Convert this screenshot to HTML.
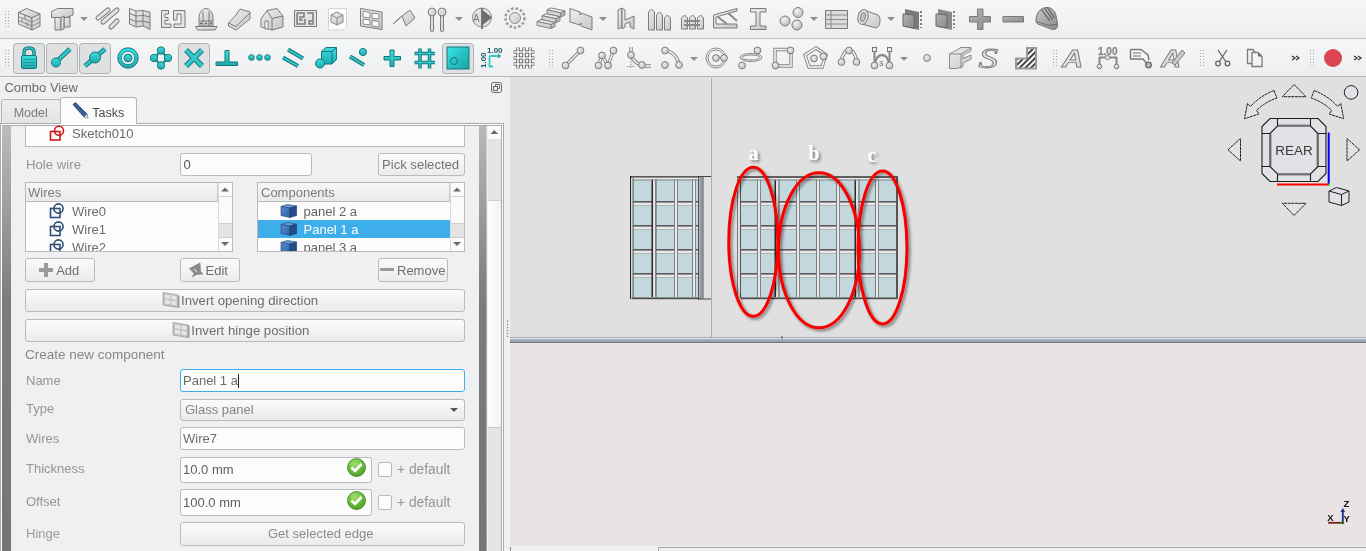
<!DOCTYPE html>
<html><head><meta charset="utf-8"><style>
*{margin:0;padding:0;box-sizing:border-box}
html,body{width:1366px;height:551px;overflow:hidden;background:#eff0f1;font-family:"Liberation Sans",sans-serif;font-size:13px;color:#31363b;position:relative}
.a{position:absolute}
svg{will-change:transform}
svg text{font-family:"Liberation Sans",sans-serif}
svg text.ser{font-family:"Liberation Serif",serif}
svg .serif text{font-family:"Liberation Serif",serif;font-weight:bold;font-size:20px}
.inp{position:absolute;background:#fcfcfc;border:1px solid #b8babc;border-radius:3px}
.btn{position:absolute;background:linear-gradient(#fbfbfb,#eaebec);border:1px solid #b8babc;border-radius:3px}
.lst{position:absolute;background:#fcfcfc;border:1px solid #b8babc}
</style></head><body>
<div class="a" style="left:0;top:0;width:1366px;height:38px;background:linear-gradient(#f6f7f7,#eceef0)"></div><div class="a" style="left:0;top:38px;width:1366px;height:1px;background:#bfc1c3"></div><div class="a" style="left:0;top:39px;width:1366px;height:37px;background:linear-gradient(#f6f7f7,#eceef0)"></div><div class="a" style="left:0;top:76px;width:1366px;height:1px;background:#b3b5b7"></div><svg class="a" style="left:0;top:0" width="1366" height="77"><g fill="#a4a6a8"><rect x="5" y="11" width="1" height="1"/><rect x="8" y="11" width="1" height="1"/><rect x="5" y="14" width="1" height="1"/><rect x="8" y="14" width="1" height="1"/><rect x="5" y="17" width="1" height="1"/><rect x="8" y="17" width="1" height="1"/><rect x="5" y="20" width="1" height="1"/><rect x="8" y="20" width="1" height="1"/><rect x="5" y="23" width="1" height="1"/><rect x="8" y="23" width="1" height="1"/><rect x="5" y="26" width="1" height="1"/><rect x="8" y="26" width="1" height="1"/><rect x="5" y="50" width="1" height="1"/><rect x="8" y="50" width="1" height="1"/><rect x="5" y="53" width="1" height="1"/><rect x="8" y="53" width="1" height="1"/><rect x="5" y="56" width="1" height="1"/><rect x="8" y="56" width="1" height="1"/><rect x="5" y="59" width="1" height="1"/><rect x="8" y="59" width="1" height="1"/><rect x="5" y="62" width="1" height="1"/><rect x="8" y="62" width="1" height="1"/><rect x="5" y="65" width="1" height="1"/><rect x="8" y="65" width="1" height="1"/><rect x="549" y="50" width="1" height="1"/><rect x="552" y="50" width="1" height="1"/><rect x="549" y="53" width="1" height="1"/><rect x="552" y="53" width="1" height="1"/><rect x="549" y="56" width="1" height="1"/><rect x="552" y="56" width="1" height="1"/><rect x="549" y="59" width="1" height="1"/><rect x="552" y="59" width="1" height="1"/><rect x="549" y="62" width="1" height="1"/><rect x="552" y="62" width="1" height="1"/><rect x="549" y="65" width="1" height="1"/><rect x="552" y="65" width="1" height="1"/><rect x="1053" y="50" width="1" height="1"/><rect x="1056" y="50" width="1" height="1"/><rect x="1053" y="53" width="1" height="1"/><rect x="1056" y="53" width="1" height="1"/><rect x="1053" y="56" width="1" height="1"/><rect x="1056" y="56" width="1" height="1"/><rect x="1053" y="59" width="1" height="1"/><rect x="1056" y="59" width="1" height="1"/><rect x="1053" y="62" width="1" height="1"/><rect x="1056" y="62" width="1" height="1"/><rect x="1053" y="65" width="1" height="1"/><rect x="1056" y="65" width="1" height="1"/><rect x="1200" y="50" width="1" height="1"/><rect x="1203" y="50" width="1" height="1"/><rect x="1200" y="53" width="1" height="1"/><rect x="1203" y="53" width="1" height="1"/><rect x="1200" y="56" width="1" height="1"/><rect x="1203" y="56" width="1" height="1"/><rect x="1200" y="59" width="1" height="1"/><rect x="1203" y="59" width="1" height="1"/><rect x="1200" y="62" width="1" height="1"/><rect x="1203" y="62" width="1" height="1"/><rect x="1200" y="65" width="1" height="1"/><rect x="1203" y="65" width="1" height="1"/><rect x="1310" y="50" width="1" height="1"/><rect x="1313" y="50" width="1" height="1"/><rect x="1310" y="53" width="1" height="1"/><rect x="1313" y="53" width="1" height="1"/><rect x="1310" y="56" width="1" height="1"/><rect x="1313" y="56" width="1" height="1"/><rect x="1310" y="59" width="1" height="1"/><rect x="1313" y="59" width="1" height="1"/><rect x="1310" y="62" width="1" height="1"/><rect x="1313" y="62" width="1" height="1"/><rect x="1310" y="65" width="1" height="1"/><rect x="1313" y="65" width="1" height="1"/></g></svg><svg class="a" style="left:0;top:0" width="1366" height="77" viewBox="0 0 1366 77"><defs>
<linearGradient id="gg" x1="0" y1="0" x2="1" y2="1"><stop offset="0" stop-color="#f0f0f0"/><stop offset="1" stop-color="#c6c6c6"/></linearGradient>
<linearGradient id="gd" x1="0" y1="0" x2="1" y2="1"><stop offset="0" stop-color="#b4b4b4"/><stop offset="1" stop-color="#8a8a8a"/></linearGradient>
<linearGradient id="gh" x1="0" y1="0" x2="1" y2="1"><stop offset="0" stop-color="#c8c8c8"/><stop offset="1" stop-color="#8c8c8c"/></linearGradient>
<radialGradient id="gs" cx="0.4" cy="0.35" r="0.7"><stop offset="0" stop-color="#f2f2f2"/><stop offset="1" stop-color="#b8b8b8"/></radialGradient>
<radialGradient id="gp" cx="0.4" cy="0.35" r="0.7"><stop offset="0" stop-color="#eeeeee"/><stop offset="1" stop-color="#bdbdbd"/></radialGradient>
<linearGradient id="tg" x1="0" y1="0" x2="0" y2="1"><stop offset="0" stop-color="#3adfe2"/><stop offset="1" stop-color="#1fa9ac"/></linearGradient>
<linearGradient id="tg2" x1="0" y1="0" x2="1" y2="1"><stop offset="0" stop-color="#3ae3e6"/><stop offset="1" stop-color="#17a3a6"/></linearGradient>
</defs><g fill="url(#gg)" stroke="#7b7b7b" stroke-width="1"><path d="M18.5 12.5L26.5 8.5L40 14L32 18z"/><path d="M18.5 12.5L32 18V30L18.5 24z"/><path d="M32 18L40 14V26L32 30z"/></g><g stroke="#8a8a8a" fill="none"><path d="M18.5 16.5L32 22M18.5 20.5L32 26M32 22L40 18M32 26L40 22M25 15v4M22 18v4M27 22v4"/></g><g fill="url(#gg)" stroke="#7b7b7b" stroke-width="1"><path d="M51.5 11.5L58 8.5H73V15L67 17.5H51.5z"/><path d="M55 17.5H61V30H55z"/><path d="M64 17.5H70V27H64z"/><path d="M61 17.5L64 16V29L61 30z"/></g><path d="M80 17h8l-4 4z" fill="#8d8f91"/><path d="M98 18L108 10" stroke="#7b7b7b" stroke-width="5" stroke-linecap="round"/><path d="M98 18L108 10" stroke="#e2e2e2" stroke-width="3" stroke-linecap="round"/><path d="M103 22L117 10" stroke="#7b7b7b" stroke-width="5" stroke-linecap="round"/><path d="M103 22L117 10" stroke="#e2e2e2" stroke-width="3" stroke-linecap="round"/><path d="M111 27L117 21" stroke="#7b7b7b" stroke-width="5" stroke-linecap="round"/><path d="M111 27L117 21" stroke="#e2e2e2" stroke-width="3" stroke-linecap="round"/><g fill="url(#gg)" stroke="#7b7b7b" stroke-width="1"><path d="M129.5 8.5L136 11L143 10.5L150 12V29.5L143 26L136 27L129.5 24z"/></g><g stroke="#7b7b7b" fill="none"><path d="M136 11V27M143 10.5V26M129.5 13.5L136 16L143 15.5L150 17M129.5 19L136 21.5L143 21L150 23"/></g><g fill="#e4e4e4" stroke="#7b7b7b"><path d="M161.5 10.5H168.5V14H165V17.5H168V20.5H165V24H171V27.5H161.5z"/><path d="M173.5 10.5H185V27.5H174V24H181V14H177V20H173.5z"/></g><g fill="url(#gg)" stroke="#7b7b7b" stroke-width="1"><path d="M199 26V18C199 12 203 8.5 206 8.5C209 8.5 213 12 213 18V26z"/><path d="M195.5 26.5H217L215 30H197.5z"/></g><g stroke="#7b7b7b" fill="none"><path d="M199 21H213M203 11.5V26M209 11.5V26"/></g><g fill="#555"><circle cx="201" cy="23.5" r="1"/><circle cx="206" cy="23.5" r="1"/><circle cx="211" cy="23.5" r="1"/></g><g fill="url(#gg)" stroke="#7b7b7b" stroke-width="1"><path d="M228.5 23L236 15L240 9L250 12V19L236 30L228.5 26z"/><path d="M228.5 23L236 26.5L250 13" fill="none"/></g><g fill="url(#gg)" stroke="#7b7b7b" stroke-width="1"><path d="M261 19L267 10.5L277 8.5L283 16V27L272 30L261 27z"/></g><g stroke="#7b7b7b" fill="none"><path d="M267 10.5L272 18.5L283 16M272 18.5V30"/></g><path d="M265 21H268V29H265z" fill="#fff" stroke="#7b7b7b"/><path d="M294.5 10.5H316.5V26.5H294.5z" fill="#e4e4e4" stroke="#7b7b7b"/><path d="M297 13H304V17H300V20H303M297 13V24H305V19M307 13H313V24H309V21H312" fill="none" stroke="#7b7b7b" stroke-width="1.5"/><path d="M328.5 8.5H346.5V27L344 30H328.5z" fill="#fcfcfc" stroke="#d4d4d4"/><g fill="url(#gg)" stroke="#8a8a8a"><path d="M331 15L337 12L343 15V22L337 25L331 22z"/></g><path d="M331 15L337 18L343 15M337 18V25" fill="none" stroke="#8a8a8a"/><g fill="url(#gg)" stroke="#7b7b7b" stroke-width="1"><path d="M360.5 8.5L382 12V29.5L360.5 26z"/></g><g fill="#fafafa" stroke="#8a8a8a"><path d="M363 11L370 12.5V18L363 17z"/><path d="M372 13L379 14V19L372 18.5z"/><path d="M363 19L370 20V25L363 24z"/><path d="M372 20.5L379 21.5V27L372 26z"/></g><g fill="url(#gg)" stroke="#7b7b7b" stroke-width="1"><path d="M393 24L402 16L406 26L415 18L410 10L402 16z"/></g><path d="M432 12V30" stroke="#7b7b7b" stroke-width="4" stroke-linecap="round"/><path d="M432 12V30" stroke="#e0e0e0" stroke-width="2" stroke-linecap="round"/><circle cx="432" cy="12" r="4" fill="url(#gg)" stroke="#7b7b7b"/><path d="M442 12V30" stroke="#7b7b7b" stroke-width="4" stroke-linecap="round"/><path d="M442 12V30" stroke="#e0e0e0" stroke-width="2" stroke-linecap="round"/><circle cx="442" cy="12" r="4" fill="url(#gg)" stroke="#7b7b7b"/><path d="M455 17h8l-4 4z" fill="#8d8f91"/><circle cx="482" cy="17.5" r="9.5" fill="#e2e2e2" stroke="#8a8a8a"/><path d="M482 8V29" stroke="#777" stroke-width="2"/><path d="M482 9.5L492 17.5L482 25.5z" fill="#6d6d6d"/><text x="473" y="22" font-size="10" fill="#777" font-family="Liberation Sans">A</text><circle cx="515" cy="18" r="9.5" fill="none" stroke="#9a9a9a" stroke-width="2.5" stroke-dasharray="2.5 2"/><circle cx="515" cy="18" r="5.5" fill="url(#gg)" stroke="#8a8a8a"/><path d="M547 9.9L551 7.9L565 10.9L561 12.9z" fill="#ececec" stroke="#7b7b7b" stroke-width="0.9"/><path d="M547 9.9L561 12.9V16.9L547 13.9z" fill="#d4d4d4" stroke="#7b7b7b" stroke-width="0.9"/><path d="M561 12.9L565 10.9V14.9L561 16.9z" fill="#bdbdbd" stroke="#7b7b7b" stroke-width="0.9"/><path d="M542 15.7L546 13.7L560 16.7L556 18.7z" fill="#ececec" stroke="#7b7b7b" stroke-width="0.9"/><path d="M542 15.7L556 18.7V22.7L542 19.7z" fill="#d4d4d4" stroke="#7b7b7b" stroke-width="0.9"/><path d="M556 18.7L560 16.7V20.7L556 22.7z" fill="#bdbdbd" stroke="#7b7b7b" stroke-width="0.9"/><path d="M537 21.5L541 19.5L555 22.5L551 24.5z" fill="#ececec" stroke="#7b7b7b" stroke-width="0.9"/><path d="M537 21.5L551 24.5V28.5L537 25.5z" fill="#d4d4d4" stroke="#7b7b7b" stroke-width="0.9"/><path d="M551 24.5L555 22.5V26.5L551 28.5z" fill="#bdbdbd" stroke="#7b7b7b" stroke-width="0.9"/><g fill="url(#gg)" stroke="#7b7b7b" stroke-width="1"><path d="M570 8.5L580 12V15L581 14V13L592 17V30L581 26V23L580 24V25L570 22z"/></g><path d="M599 17h8l-4 4z" fill="#8d8f91"/><g fill="url(#gg)" stroke="#7b7b7b" stroke-width="1"><path d="M618 10L622 8V27L618 29z"/><path d="M622 8L625 10V20L634 16V29L630 27V22L625 24V27L622 29z"/></g><path d="M648.5 12L651.5 9L654.5 12V30H648.5z" fill="url(#gg)" stroke="#7b7b7b"/><path d="M656.5 15L659.5 12L662.5 15V30H656.5z" fill="url(#gg)" stroke="#7b7b7b"/><path d="M664.5 18L667.5 15L670.5 18V30H664.5z" fill="url(#gg)" stroke="#7b7b7b"/><path d="M681.5 18L684.5 15L687.5 18V29H681.5z" fill="url(#gg)" stroke="#7b7b7b"/><path d="M689.5 18L692.5 15L695.5 18V29H689.5z" fill="url(#gg)" stroke="#7b7b7b"/><path d="M697.5 18L700.5 15L703.5 18V29H697.5z" fill="url(#gg)" stroke="#7b7b7b"/><path d="M684 21H700M684 25H700" stroke="#8a8a8a" stroke-width="2"/><g fill="url(#gg)" stroke="#7b7b7b" stroke-width="1"><path d="M713.5 15L737 8.5V11L716 17V24H737V28H713.5z"/></g><path d="M718 17L727 24M728 13L737 21" stroke="#8a8a8a" stroke-width="2" fill="none"/><path d="M750.5 8.5H766V12H760V26H766V29.5H750.5V26H756V12H750.5z" fill="url(#gg)" stroke="#7b7b7b" stroke-width="1"/><circle cx="798" cy="12.5" r="5" fill="url(#gs)" stroke="#7b7b7b"/><circle cx="785" cy="21" r="5" fill="url(#gs)" stroke="#7b7b7b"/><circle cx="797" cy="25" r="5" fill="url(#gs)" stroke="#7b7b7b"/><path d="M810 17h8l-4 4z" fill="#8d8f91"/><path d="M825.5 10.5H847.5V28.5H825.5z" fill="#dcdcdc" stroke="#7b7b7b"/><path d="M825.5 15H847.5M825.5 19.5H847.5M825.5 24H847.5M831 10.5V28.5" stroke="#8a8a8a" fill="none"/><path d="M864 10L878 15C881 16 881 27 876 28L862 24" fill="url(#gg)" stroke="#7b7b7b"/><ellipse cx="863" cy="17" rx="5" ry="7.5" transform="rotate(15 863 17)" fill="#e8e8e8" stroke="#7b7b7b"/><ellipse cx="863" cy="17" rx="2.5" ry="4.5" transform="rotate(15 863 17)" fill="#bdbdbd" stroke="#8a8a8a"/><path d="M887 17h8l-4 4z" fill="#8d8f91"/><path d="M905 9L919 12V30L905 27z" fill="#7a7a7a"/><path d="M903 14L914 15V28L903 26z" fill="url(#gd)" stroke="#666"/><path d="M921 11V28" stroke="#555" stroke-dasharray="2 2" stroke-width="1.5"/><path d="M938 9L952 12V30L938 27z" fill="#8a8a8a"/><path d="M936 14L947 15V28L936 26z" fill="url(#gd)" stroke="#666"/><path d="M954 11V28" stroke="#666" stroke-dasharray="2 2" stroke-width="1.5"/><path d="M977.5 9H983V16.5H990.5V22H983V29.5H977.5V22H969.5V16.5H977.5z" fill="url(#gd)" stroke="#7b7b7b"/><path d="M1003 16.5H1023.5V22H1003z" fill="url(#gd)" stroke="#7b7b7b"/><path d="M1036 20.5C1036 12.5 1041 7.5 1047 7.5C1053 7.5 1056 12.5 1056.5 18.5L1057.5 24C1058 28.5 1055 30.5 1051 29L1038 24C1036.5 23.5 1036 22.5 1036 20.5z" fill="url(#gh)" stroke="#6e6e6e"/><path d="M1041.5 9.5L1050 21M1044.5 8.2L1052.5 19.5M1047.5 7.8L1054.5 18" stroke="#5a5a5a" stroke-width="1.1" fill="none"/><path d="M1036.5 21.5L1049 25.5L1057.5 24" stroke="#6a6a6a" fill="none"/><rect x="13.5" y="43.5" width="31" height="30" rx="3" fill="#dfe0e1" stroke="#b0b2b4"/><rect x="46.5" y="43.5" width="31" height="30" rx="3" fill="#dfe0e1" stroke="#b0b2b4"/><rect x="79.5" y="43.5" width="31" height="30" rx="3" fill="#dfe0e1" stroke="#b0b2b4"/><rect x="178.5" y="43.5" width="31" height="30" rx="3" fill="#dfe0e1" stroke="#b0b2b4"/><rect x="442.5" y="43.5" width="31" height="30" rx="3" fill="#dfe0e1" stroke="#b0b2b4"/><path d="M24 55.5V52.5C24 49.5 26 48 29 48C32 48 34 49.5 34 52.5V55.5" fill="none" stroke="#15777a" stroke-width="3.5"/><path d="M24 55.5V52.5C24 49.5 26 48 29 48C32 48 34 49.5 34 52.5V55.5" fill="none" stroke="#30c9cc" stroke-width="1.5"/><rect x="21.5" y="55.5" width="15" height="13" rx="1.5" fill="url(#tg)" stroke="#15777a" stroke-width="1"/><path d="M23 59.5H35M23 62.5H35M23 65.5H35" stroke="#1a8e91" stroke-width="0.8"/><path d="M56 62L70 49" stroke="#15777a" stroke-width="4.5"/><path d="M56 62L70 49" stroke="#30c9cc" stroke-width="2.5"/><circle cx="56" cy="62.5" r="4.5" fill="url(#tg)" stroke="#15777a" stroke-width="1"/><path d="M85 66L105 49" stroke="#15777a" stroke-width="4.5"/><path d="M85 66L105 49" stroke="#30c9cc" stroke-width="2.5"/><circle cx="95" cy="57.5" r="5.5" fill="url(#tg)" stroke="#15777a" stroke-width="1"/><circle cx="128" cy="58" r="10.2" fill="url(#tg)" stroke="#15777a"/><circle cx="128" cy="58" r="6.6" fill="#f6f7f8" stroke="#15777a" stroke-width="0.8"/><circle cx="128" cy="58" r="4" fill="url(#tg)" stroke="#15777a"/><path d="M161 51L168 58L161 65L154 58z" fill="none" stroke="#15777a" stroke-width="2.2"/><path d="M161 51L168 58L161 65L154 58z" fill="none" stroke="#30c9cc" stroke-width="0.8"/><circle cx="161" cy="50.5" r="3.7" fill="url(#tg)" stroke="#15777a" stroke-width="1"/><circle cx="168" cy="58" r="3.7" fill="url(#tg)" stroke="#15777a" stroke-width="1"/><circle cx="161" cy="65.5" r="3.7" fill="url(#tg)" stroke="#15777a" stroke-width="1"/><circle cx="154" cy="58" r="3.7" fill="url(#tg)" stroke="#15777a" stroke-width="1"/><path d="M186 50L202 66M202 50L186 66" stroke="#15777a" stroke-width="5.5"/><path d="M186 50L202 66M202 50L186 66" stroke="#30c9cc" stroke-width="3.5"/><path d="M225 50.5H229V62H237.5V65.5H216V62H225z" fill="url(#tg)" stroke="#15777a" stroke-width="1"/><circle cx="251.5" cy="57.5" r="2.8" fill="url(#tg)" stroke="#15777a" stroke-width="1"/><circle cx="259.5" cy="57.5" r="2.8" fill="url(#tg)" stroke="#15777a" stroke-width="1"/><circle cx="267.5" cy="57.5" r="2.8" fill="url(#tg)" stroke="#15777a" stroke-width="1"/><path d="M283 57.5L298 66M288 49.5L303 58.5" stroke="#15777a" stroke-width="4"/><path d="M283 57.5L298 66M288 49.5L303 58.5" stroke="#30c9cc" stroke-width="2"/><path d="M321.5 51.5L326 47.5H336.5V59.5L332 64H321.5z" fill="url(#tg)" stroke="#15777a" stroke-width="1"/><path d="M321.5 51.5H332V64M332 51.5L336.5 47.5" fill="none" stroke="#15777a"/><circle cx="320" cy="63.5" r="4.5" fill="url(#tg)" stroke="#15777a" stroke-width="1"/><path d="M350 56.5L364 65" stroke="#15777a" stroke-width="4"/><path d="M350 56.5L364 65" stroke="#30c9cc" stroke-width="2"/><circle cx="363" cy="52" r="3.6" fill="url(#tg)" stroke="#15777a" stroke-width="1"/><path d="M390 50H394V56.5H400.5V60H394V66.5H390V60H384V56.5H390z" fill="url(#tg)" stroke="#15777a" stroke-width="1"/><path d="M420 48.5V68.5M429.5 48.5V68.5M414.5 53.5H435M414.5 62.5H435" stroke="#15777a" stroke-width="3.5"/><path d="M420 48.5V68.5M429.5 48.5V68.5M414.5 53.5H435M414.5 62.5H435" stroke="#30c9cc" stroke-width="1.5"/><rect x="447" y="47" width="22" height="22" fill="url(#tg2)" stroke="#15777a"/><circle cx="454" cy="61" r="3.5" fill="none" stroke="#15777a"/><text x="487" y="53" font-size="8" font-weight="bold" fill="#1d5a5c">1.00</text><path d="M489.5 56V66.5H493M489.5 56H500" fill="none" stroke="#30c9cc" stroke-width="1.8"/><path d="M498 54L500.5 56L498 58" fill="none" stroke="#1d7a7c" stroke-width="1"/><text x="0" y="0" font-size="8" font-weight="bold" fill="#1d5a5c" transform="translate(486 68) rotate(-90)">1.00</text><path d="M518 47.5V68.5M524 47.5V68.5M530 47.5V68.5M513.5 52H534.5M513.5 58H534.5M513.5 64H534.5" stroke="#444" stroke-width="3.2"/><path d="M518 47.5V68.5M524 47.5V68.5M530 47.5V68.5M513.5 52H534.5M513.5 58H534.5M513.5 64H534.5" stroke="#fafafa" stroke-width="1.6"/><path d="M565.5 65.5L580.5 50.5" stroke="#858585" stroke-width="3.4"/><path d="M565.5 65.5L580.5 50.5" stroke="#f6f6f6" stroke-width="1.5"/><circle cx="565.5" cy="65.5" r="3.4" fill="url(#gp)" stroke="#7d7d7d"/><circle cx="580.5" cy="50.5" r="3.4" fill="url(#gp)" stroke="#7d7d7d"/><path d="M598.5 65.5L602 55.5" stroke="#858585" stroke-width="3.4"/><path d="M598.5 65.5L602 55.5" stroke="#f6f6f6" stroke-width="1.5"/><path d="M602 55.5L608 65.5" stroke="#858585" stroke-width="3.4"/><path d="M602 55.5L608 65.5" stroke="#f6f6f6" stroke-width="1.5"/><path d="M608 65.5L613.5 50.5" stroke="#858585" stroke-width="3.4"/><path d="M608 65.5L613.5 50.5" stroke="#f6f6f6" stroke-width="1.5"/><circle cx="598.5" cy="65.5" r="3.4" fill="url(#gp)" stroke="#7d7d7d"/><circle cx="602" cy="55.5" r="3.4" fill="url(#gp)" stroke="#7d7d7d"/><circle cx="608" cy="65.5" r="3.4" fill="url(#gp)" stroke="#7d7d7d"/><circle cx="613.5" cy="50.5" r="3.4" fill="url(#gp)" stroke="#7d7d7d"/><path d="M631 47V54M645 66H651" stroke="#858585" stroke-width="3.4"/><path d="M631 47V54M645 66H651" stroke="#f6f6f6" stroke-width="1.5"/><path d="M631 55C633 60 637 64 642 65.5" stroke="#858585" stroke-width="3.4" fill="none"/><path d="M631 55C633 60 637 64 642 65.5" stroke="#f6f6f6" stroke-width="1.5" fill="none"/><path d="M631 59V68M627 66.5H635" stroke="#999" stroke-dasharray="1.5 1"/><circle cx="631" cy="55" r="3.4" fill="url(#gp)" stroke="#7d7d7d"/><circle cx="642" cy="65" r="3.4" fill="url(#gp)" stroke="#7d7d7d"/><path d="M665 50.5C672 51 678 57 679 65" stroke="#858585" stroke-width="3.4" fill="none"/><path d="M665 50.5C672 51 678 57 679 65" stroke="#f6f6f6" stroke-width="1.5" fill="none"/><circle cx="665" cy="50.5" r="3.4" fill="url(#gp)" stroke="#7d7d7d"/><circle cx="665" cy="65" r="3.4" fill="url(#gp)" stroke="#7d7d7d"/><circle cx="679" cy="65" r="3.4" fill="url(#gp)" stroke="#7d7d7d"/><path d="M690 57h8l-4 4z" fill="#8d8f91"/><circle cx="716" cy="58" r="10" fill="none" stroke="#8a8a8a"/><circle cx="716" cy="58" r="8" fill="none" stroke="#8a8a8a"/><circle cx="716" cy="58" r="3.4" fill="url(#gp)" stroke="#7d7d7d"/><circle cx="724" cy="58" r="3.4" fill="url(#gp)" stroke="#7d7d7d"/><ellipse cx="751" cy="57.5" rx="11" ry="4" fill="none" stroke="#8a8a8a"/><ellipse cx="751" cy="57.5" rx="9" ry="2.5" fill="none" stroke="#8a8a8a"/><circle cx="757.5" cy="50.5" r="3.4" fill="url(#gp)" stroke="#7d7d7d"/><circle cx="742" cy="65.5" r="3.4" fill="url(#gp)" stroke="#7d7d7d"/><path d="M775 49.5H791V66H775z" fill="none" stroke="#858585" stroke-width="3.4"/><path d="M775 49.5H791V66H775z" fill="none" stroke="#f6f6f6" stroke-width="1.5"/><circle cx="775.5" cy="65.5" r="3.4" fill="url(#gp)" stroke="#7d7d7d"/><circle cx="790.5" cy="50.5" r="3.4" fill="url(#gp)" stroke="#7d7d7d"/><path d="M816 48L826 55L822 67H809L805 55z" fill="none" stroke="#858585" stroke-width="3.4"/><path d="M816 48L826 55L822 67H809L805 55z" fill="none" stroke="#f6f6f6" stroke-width="1.5"/><circle cx="814" cy="58.5" r="3.4" fill="url(#gp)" stroke="#7d7d7d"/><circle cx="823.5" cy="56.5" r="3.4" fill="url(#gp)" stroke="#7d7d7d"/><path d="M841.5 62C842 55 845 50 849 50C853 50 856 55 856.5 62" fill="none" stroke="#858585" stroke-width="3.4"/><path d="M841.5 62C842 55 845 50 849 50C853 50 856 55 856.5 62" fill="none" stroke="#f6f6f6" stroke-width="1.5"/><circle cx="849" cy="50.5" r="3.4" fill="url(#gp)" stroke="#7d7d7d"/><circle cx="841.5" cy="62" r="3.4" fill="url(#gp)" stroke="#7d7d7d"/><circle cx="856.5" cy="62" r="3.4" fill="url(#gp)" stroke="#7d7d7d"/><path d="M874.5 49V65M889.5 49V65" stroke="#8a8a8a" stroke-width="2"/><path d="M875 64C876 52 888 52 889 64" fill="none" stroke="#8a8a8a" stroke-width="2.5"/><rect x="872.5" y="47.5" width="4" height="4" fill="#eee" stroke="#777"/><rect x="887.5" y="47.5" width="4" height="4" fill="#eee" stroke="#777"/><text x="879" y="66" font-size="8" fill="#888" font-family="Liberation Sans" font-weight="bold">3</text><circle cx="874.5" cy="65.5" r="3.4" fill="url(#gp)" stroke="#7d7d7d"/><circle cx="889.5" cy="65.5" r="3.4" fill="url(#gp)" stroke="#7d7d7d"/><path d="M900 57h8l-4 4z" fill="#8d8f91"/><circle cx="927" cy="58" r="3.5" fill="url(#gp)" stroke="#888"/><path d="M949.5 54L961 47.5H971V51L963 55V58.5L971 55V59L963 63V66.5L957 68.5H949.5z" fill="url(#gg)" stroke="#8a8a8a"/><path d="M949.5 54H961V68.5M961 54L971 48" fill="none" stroke="#8a8a8a"/><text class="ser" x="0" y="0" font-size="28" font-style="italic" fill="#e4e4e4" stroke="#7f7f7f" stroke-width="0.9" transform="translate(978.5 67.5) scale(1.4 1.05)">S</text><defs><pattern id="hp" width="4" height="4" patternUnits="userSpaceOnUse" patternTransform="rotate(45)"><rect width="2" height="4" fill="#444"/><rect x="2" width="2" height="4" fill="#fafafa"/></pattern></defs><path d="M1016 58.5H1027V48H1036V68.5H1016z" fill="url(#hp)" stroke="#999" stroke-width="2"/><text x="0" y="0" font-size="24" font-style="italic" font-weight="bold" fill="#e2e2e2" stroke="#7d7d7d" stroke-width="0.9" transform="translate(1062 66.5) scale(1.22 1)">A</text><text x="1098" y="55" font-size="10" font-weight="bold" fill="#8a8a8a" stroke="#888" stroke-width="0.3">1.00</text><path d="M1099 57.5H1117M1099.5 57V66M1116.5 57V66" stroke="#888" stroke-width="2"/><circle cx="1107.5" cy="57.5" r="2.2" fill="#e0e0e0" stroke="#888"/><circle cx="1099.5" cy="66.5" r="2.3" fill="url(#gp)" stroke="#7d7d7d"/><circle cx="1116.5" cy="66.5" r="2.3" fill="url(#gp)" stroke="#7d7d7d"/><path d="M1130.5 49.5H1141L1148 55L1149 60" fill="none" stroke="#7b7b7b" stroke-width="1.5"/><path d="M1130.5 49.5V59H1143L1148 65" fill="none" stroke="#7b7b7b" stroke-width="1.5"/><path d="M1133 53H1141M1133 56H1141" stroke="#777" stroke-width="1.2"/><circle cx="1148.5" cy="65" r="2.8" fill="#bbb" stroke="#6a6a6a" stroke-width="1.3"/><text x="0" y="0" font-size="24" font-style="italic" font-weight="bold" fill="#e2e2e2" stroke="#7d7d7d" stroke-width="0.9" transform="translate(1161 66.5) scale(1.15 1)">A</text><path d="M1172 63L1182 50L1185 53L1175 65z" fill="#ccc" stroke="#777"/><path d="M1218 50L1226 62M1227 50L1219 62" stroke="#666" stroke-width="1.3"/><circle cx="1218" cy="63.5" r="2.3" fill="none" stroke="#666" stroke-width="1.3"/><circle cx="1227.5" cy="63.5" r="2.3" fill="none" stroke="#666" stroke-width="1.3"/><path d="M1247.5 49.5H1253L1255 52V63.5H1247.5z" fill="#f0f0f0" stroke="#7b7b7b" stroke-width="1.3"/><path d="M1252 52.5H1258L1262 56.5V66.5H1252z" fill="#f4f4f4" stroke="#7b7b7b" stroke-width="1.3"/><path d="M1258 52.5V56.5H1262z" fill="#666"/><path d="M1292 56L1295 58L1292 60M1296 56L1299 58L1296 60" fill="none" stroke="#333" stroke-width="1.2"/><circle cx="1333" cy="58" r="9" fill="#da4453"/><path d="M1354 56L1357 58L1354 60M1358 56L1361 58L1358 60" fill="none" stroke="#333" stroke-width="1.2"/></svg>
<div class="a" style="left:0;top:123px;width:504px;height:440px;border:1px solid #a9abad;background:#fcfcfc"></div><div class="a" style="left:2px;top:125px;width:500px;height:440px;border:1px solid #a9abad;border-left:none;background:#eff0f1"></div><div class="a" style="left:2px;top:126px;width:9px;height:425px;background:linear-gradient(#bbbcbc 0px,#7b7d7c 175px,#747675 425px)"></div><div class="a" style="left:479px;top:126px;width:8px;height:425px;background:linear-gradient(#b8b9b9 0px,#7b7d7c 175px,#747675 425px)"></div><div class="a" style="left:486px;top:126px;width:1px;height:425px;background:rgba(255,255,255,0.35)"></div><div class="a" style="left:488px;top:126px;width:13px;height:425px;background:#e3e4e4"></div><div class="a" style="left:488px;top:126px;width:13px;height:13px;background:#fafafa"></div><div class="a" style="left:488px;top:200px;width:13px;height:228px;background:linear-gradient(90deg,#fdfdfd,#f2f2f2);border-top:1px solid #d0d0d0;border-bottom:1px solid #c8c8c8"></div><div class="a" style="left:1px;top:99px;width:60px;height:24px;border:1px solid #b3b5b7;border-bottom:none;border-radius:3px 3px 0 0;background:linear-gradient(#eceeef,#e2e4e5)"></div><div class="a" style="left:60px;top:97px;width:77px;height:27px;border:1px solid #b3b5b7;border-bottom:none;border-radius:3px 3px 0 0;background:#fcfcfc"></div><div class="a" style="left:61px;top:123px;width:75px;height:2px;background:#fcfcfc"></div><div class="a" style="left:25px;top:125px;width:440px;height:22px;background:#fcfcfc;border:1px solid #b8babc;border-top:none"></div><div class="a" style="left:2px;top:124px;width:501px;height:1px;background:#fcfcfc"></div><div class="a" style="left:2px;top:125px;width:500px;height:1px;background:#a9abad"></div><div class="inp" style="left:180px;top:153px;width:132px;height:23px;"></div><div class="btn" style="left:378px;top:153px;width:87px;height:23px;"></div><div class="lst" style="left:25px;top:182px;width:208px;height:70px;"></div><div class="a" style="left:26px;top:183px;width:192px;height:19px;background:linear-gradient(#f7f7f7,#e8e9ea);border-bottom:1px solid #b8babc;border-right:1px solid #c8cacb"></div><div class="a" style="left:218px;top:183px;width:14px;height:68px;background:#fbfbfb;border-left:1px solid #d8d9da"></div><div class="a" style="left:219px;top:223px;width:13px;height:15px;background:#e3e4e4;border-top:1px solid #cfd0d1;border-bottom:1px solid #cfd0d1"></div><div class="a" style="left:219px;top:196px;width:13px;height:1px;background:#d4d5d6"></div><div class="lst" style="left:257px;top:182px;width:208px;height:70px;"></div><div class="a" style="left:258px;top:183px;width:192px;height:19px;background:linear-gradient(#f7f7f7,#e8e9ea);border-bottom:1px solid #b8babc;border-right:1px solid #c8cacb"></div><div class="a" style="left:450px;top:183px;width:14px;height:68px;background:#fbfbfb;border-left:1px solid #d8d9da"></div><div class="a" style="left:451px;top:223px;width:13px;height:15px;background:#e3e4e4;border-top:1px solid #cfd0d1;border-bottom:1px solid #cfd0d1"></div><div class="a" style="left:451px;top:196px;width:13px;height:1px;background:#d4d5d6"></div><div class="a" style="left:258px;top:220px;width:192px;height:18px;background:#3daee9"></div><div class="btn" style="left:25px;top:258px;width:70px;height:24px;"></div><div class="btn" style="left:180px;top:258px;width:60px;height:24px;"></div><div class="btn" style="left:378px;top:258px;width:70px;height:24px;"></div><div class="btn" style="left:25px;top:289px;width:440px;height:23px;"></div><div class="btn" style="left:25px;top:319px;width:440px;height:23px;"></div><div class="inp" style="left:180px;top:369px;width:285px;height:23px;border-color:#3daee9"></div><div class="btn" style="left:180px;top:399px;width:285px;height:22px;"></div><div class="inp" style="left:180px;top:427px;width:285px;height:23px;"></div><div class="inp" style="left:180px;top:457px;width:192px;height:26px;"></div><div class="inp" style="left:378px;top:462px;width:14px;height:15px;border-radius:2px"></div><div class="inp" style="left:180px;top:489px;width:192px;height:27px;"></div><div class="inp" style="left:378px;top:495px;width:14px;height:15px;border-radius:2px"></div><div class="btn" style="left:180px;top:522px;width:285px;height:24px;"></div><svg class="a" style="left:0;top:0" width="510" height="551"><defs><linearGradient id="cf" x1="0" y1="0" x2="1" y2="1"><stop offset="0" stop-color="#5a8ad0"/><stop offset="1" stop-color="#2f5fa5"/></linearGradient><clipPath id="lc"><rect x="26" y="202" width="430" height="49"/></clipPath><radialGradient id="chk" cx="0.4" cy="0.3" r="0.8"><stop offset="0" stop-color="#9ee06a"/><stop offset="1" stop-color="#3c9a18"/></radialGradient></defs><rect x="491.5" y="82.5" width="10" height="10" rx="2" fill="none" stroke="#6a6a6a"/><rect x="493.5" y="86.5" width="4" height="4" fill="none" stroke="#6a6a6a"/><path d="M495.5 86.5V84.5H499.5V88.5H497.5" fill="none" stroke="#6a6a6a"/><path d="M73 104.5L75.5 102.5L87 114L88 118L84 117z" fill="#3a5f95" stroke="#23406a" stroke-width="0.8"/><path d="M84 117L88 118L87 114" fill="#e8e0d0"/><rect x="50.5" y="131.5" width="9.5" height="8.5" fill="none" stroke="#d01818" stroke-width="1.6"/><circle cx="59" cy="130.7" r="4.5" fill="none" stroke="#d01818" stroke-width="1.6"/><g clip-path="url(#lc)"><text x="72" y="215.5" fill="#6a6c6e" font-size="13" >Wire0</text><text x="72" y="233.5" fill="#6a6c6e" font-size="13" >Wire1</text><text x="72" y="251.5" fill="#6a6c6e" font-size="13" >Wire2</text><text x="303.5" y="215.5" fill="#626466" font-size="13" >panel 2 a</text><text x="303.5" y="233.5" fill="#ffffff" font-size="13" >Panel 1 a</text><text x="303.5" y="251.5" fill="#626466" font-size="13" >panel 3 a</text><rect x="50.5" y="208.5" width="9.5" height="9" fill="none" stroke="#2f4f78" stroke-width="1.6"/><circle cx="58.5" cy="208.5" r="4.6" fill="none" stroke="#2f4f78" stroke-width="1.6"/><rect x="50.5" y="226.5" width="9.5" height="9" fill="none" stroke="#2f4f78" stroke-width="1.6"/><circle cx="58.5" cy="226.5" r="4.6" fill="none" stroke="#2f4f78" stroke-width="1.6"/><rect x="50.5" y="244.5" width="9.5" height="9" fill="none" stroke="#2f4f78" stroke-width="1.6"/><circle cx="58.5" cy="244.5" r="4.6" fill="none" stroke="#2f4f78" stroke-width="1.6"/><path d="M281 206.5L287.5 204.5L296.5 206.0L290 208.0z" fill="#6f9bd6" stroke="#2a4f88" stroke-width="0.7"/><path d="M281 206.5L290 208.0V217.5L281 215.5z" fill="url(#cf)" stroke="#2a4f88" stroke-width="0.7"/><path d="M290 208.0L296.5 206.0V215.5L290 217.5z" fill="#224c8c" stroke="#1c3f75" stroke-width="0.7"/><path d="M281 224.5L287.5 222.5L296.5 224.0L290 226.0z" fill="#6f9bd6" stroke="#2a4f88" stroke-width="0.7"/><path d="M281 224.5L290 226.0V235.5L281 233.5z" fill="url(#cf)" stroke="#2a4f88" stroke-width="0.7"/><path d="M290 226.0L296.5 224.0V233.5L290 235.5z" fill="#224c8c" stroke="#1c3f75" stroke-width="0.7"/><path d="M281 242.5L287.5 240.5L296.5 242.0L290 244.0z" fill="#6f9bd6" stroke="#2a4f88" stroke-width="0.7"/><path d="M281 242.5L290 244.0V253.5L281 251.5z" fill="url(#cf)" stroke="#2a4f88" stroke-width="0.7"/><path d="M290 244.0L296.5 242.0V251.5L290 253.5z" fill="#224c8c" stroke="#1c3f75" stroke-width="0.7"/></g><path d="M221 191.5h8l-4-4z" fill="#6a6a6a"/><path d="M221 242h8l-4 4z" fill="#6a6a6a"/><path d="M453 191.5h8l-4-4z" fill="#6a6a6a"/><path d="M453 242h8l-4 4z" fill="#6a6a6a"/><path d="M490.5 134h7.5l-3.75-4z" fill="#666"/><path d="M44 263H48V268H53V272H48V277H44V272H39V268H44z" fill="#9a9a9a"/><path d="M189.5 268.5L200 263L200.5 271.5L203 274L196.5 274.5L192.5 277L194 273.5z" fill="#8c8c8c" stroke="#777" stroke-width="0.6"/><path d="M194 269L197 272" stroke="#eee" stroke-width="1"/><path d="M380 268H394V271H380z" fill="#9a9a9a"/><path d="M163 292.5L178 295.0V307.5L163 305.0z" fill="#c4c4c4" stroke="#a0a0a0" stroke-width="0.8"/><path d="M178 295.0L179.5 295.5V308.0L178 307.5z" fill="#9a9a9a"/><g fill="#e6e6e6"><path d="M165 294.5L170 295.3V299.0L165 298.2z"/><path d="M171.5 295.5L176.5 296.3V300.0L171.5 299.2z"/><path d="M165 299.8L170 300.6V304.3L165 303.5z"/><path d="M171.5 300.8L176.5 301.6V305.3L171.5 304.5z"/></g><path d="M173 322.5L188 325.0V337.5L173 335.0z" fill="#c4c4c4" stroke="#a0a0a0" stroke-width="0.8"/><path d="M188 325.0L189.5 325.5V338.0L188 337.5z" fill="#9a9a9a"/><g fill="#e6e6e6"><path d="M175 324.5L180 325.3V329.0L175 328.2z"/><path d="M181.5 325.5L186.5 326.3V330.0L181.5 329.2z"/><path d="M175 329.8L180 330.6V334.3L175 333.5z"/><path d="M181.5 330.8L186.5 331.6V335.3L181.5 334.5z"/></g><path d="M238.5 374V388" stroke="#222" stroke-width="1"/><path d="M450 408h8l-4 4z" fill="#555"/><circle cx="356.5" cy="467.5" r="9" fill="url(#chk)" stroke="#3f7f1e" stroke-width="0.8"/><path d="M351.5 467.5L355 471.0L361.5 464.0" fill="none" stroke="#fff" stroke-width="2.6"/><circle cx="356.5" cy="500.5" r="9" fill="url(#chk)" stroke="#3f7f1e" stroke-width="0.8"/><path d="M351.5 500.5L355 504.0L361.5 497.0" fill="none" stroke="#fff" stroke-width="2.6"/><text x="4.4" y="92" fill="#6a6c6e" font-size="13" >Combo View</text><text x="13.7" y="116.6" fill="#7a7c7e" font-size="12.5" >Model</text><text x="92.2" y="116.6" fill="#4a4c4e" font-size="12.5" >Tasks</text><text x="72" y="137.8" fill="#6a6c6e" font-size="13" >Sketch010</text><text x="26" y="168.7" fill="#939597" font-size="13.2" >Hole wire</text><text x="183.5" y="169" fill="#555" font-size="13" >0</text><text x="382" y="169" fill="#747678" font-size="13.1" >Pick selected</text><text x="28" y="196.5" fill="#7a7c7e" font-size="13" >Wires</text><text x="261" y="196.5" fill="#7a7c7e" font-size="13" >Components</text><text x="56.2" y="275" fill="#6c6e70" font-size="13" >Add</text><text x="205.5" y="275" fill="#6c6e70" font-size="13" >Edit</text><text x="397" y="275" fill="#6c6e70" font-size="13" >Remove</text><text x="181" y="304.5" fill="#6c6e70" font-size="13.2" >Invert opening direction</text><text x="191.3" y="334.5" fill="#6c6e70" font-size="13.2" >Invert hinge position</text><text x="25" y="358.8" fill="#858789" font-size="13.5" >Create new component</text><text x="26" y="384.7" fill="#939597" font-size="13" >Name</text><text x="183" y="385" fill="#6a6c6e" font-size="13" >Panel 1 a</text><text x="26" y="413.4" fill="#939597" font-size="13" >Type</text><text x="185" y="414" fill="#838587" font-size="13" >Glass panel</text><text x="26" y="442.6" fill="#939597" font-size="13" >Wires</text><text x="183" y="443" fill="#6a6c6e" font-size="13" >Wire7</text><text x="26" y="473.3" fill="#939597" font-size="13" >Thickness</text><text x="183" y="474" fill="#5c5e60" font-size="13" >10.0 mm</text><text x="397" y="474" fill="#939597" font-size="13.8" >+ default</text><text x="26" y="506.4" fill="#939597" font-size="13" >Offset</text><text x="183" y="507" fill="#5c5e60" font-size="13" >100.0 mm</text><text x="397" y="507" fill="#939597" font-size="13.8" >+ default</text><text x="26" y="537.7" fill="#9a9c9e" font-size="13" >Hinge</text><text x="268" y="538" fill="#8a8c8e" font-size="13" >Get selected edge</text></svg>
<div class="a" style="left:510px;top:77px;width:856px;height:260px;background:#e0e0e0"></div><div class="a" style="left:510px;top:337px;width:856px;height:1px;background:#a9a9a9"></div><div class="a" style="left:510px;top:338px;width:856px;height:1px;background:#ebe6e6"></div><div class="a" style="left:510px;top:339px;width:856px;height:3px;background:linear-gradient(#a4b6c8,#8c9eb1)"></div><div class="a" style="left:510px;top:342px;width:856px;height:1px;background:#787878"></div><div class="a" style="left:510px;top:343px;width:856px;height:1px;background:#ece7e7"></div><div class="a" style="left:510px;top:344px;width:856px;height:202px;background:#e9e3e3"></div><div class="a" style="left:711px;top:78px;width:1px;height:259px;background:#a9a9a9"></div><div class="a" style="left:710px;top:78px;width:1px;height:259px;background:#ebe6e6"></div><div class="a" style="left:510px;top:547px;width:1px;height:4px;background:#888"></div><div class="a" style="left:658px;top:547px;width:708px;height:4px;border-left:1px solid #aaa;border-top:1px solid #aaa"></div><svg class="a" style="left:500px;top:315px" width="12" height="25"><g fill="#8e9092"><circle cx="7.5" cy="6.4" r="0.8"/><circle cx="7.5" cy="9.4" r="0.8"/><circle cx="7.5" cy="12.4" r="0.8"/><circle cx="7.5" cy="15.4" r="0.8"/><circle cx="7.5" cy="18.4" r="0.8"/><circle cx="7.5" cy="21.4" r="0.8"/></g></svg><svg class="a" style="left:0;top:0" width="1366" height="551"><defs><filter id="sh" x="-20%" y="-20%" width="140%" height="140%"><feGaussianBlur in="SourceAlpha" stdDeviation="1.5"/><feOffset dx="2" dy="2"/><feComponentTransfer><feFuncA type="linear" slope="0.45"/></feComponentTransfer><feMerge><feMergeNode/><feMergeNode in="SourceGraphic"/></feMerge></filter></defs><rect x="632" y="178" width="66" height="120" fill="#c2d8dd"/><rect x="632" y="201" width="66" height="1" fill="#5c5c5c"/><rect x="632" y="202" width="66" height="1" fill="#8c9090"/><rect x="632" y="203" width="66" height="2" fill="#ece6e6"/><rect x="632" y="205" width="66" height="1" fill="#a9b6b9"/><rect x="632" y="225" width="66" height="1" fill="#5c5c5c"/><rect x="632" y="226" width="66" height="1" fill="#8c9090"/><rect x="632" y="227" width="66" height="2" fill="#ece6e6"/><rect x="632" y="229" width="66" height="1" fill="#a9b6b9"/><rect x="632" y="249" width="66" height="1" fill="#5c5c5c"/><rect x="632" y="250" width="66" height="1" fill="#8c9090"/><rect x="632" y="251" width="66" height="2" fill="#ece6e6"/><rect x="632" y="253" width="66" height="1" fill="#a9b6b9"/><rect x="632" y="273" width="66" height="1" fill="#5c5c5c"/><rect x="632" y="274" width="66" height="1" fill="#8c9090"/><rect x="632" y="275" width="66" height="2" fill="#ece6e6"/><rect x="632" y="277" width="66" height="1" fill="#a9b6b9"/><rect x="652" y="178" width="1" height="120" fill="#768183"/><rect x="653" y="178" width="2" height="120" fill="#ece6e6"/><rect x="655" y="178" width="1" height="120" fill="#7d888a"/><rect x="674" y="178" width="1" height="120" fill="#768183"/><rect x="675" y="178" width="2" height="120" fill="#ece6e6"/><rect x="677" y="178" width="1" height="120" fill="#7d888a"/><rect x="692" y="178" width="1" height="120" fill="#768183"/><rect x="693" y="178" width="2" height="120" fill="#ece6e6"/><rect x="695" y="178" width="1" height="120" fill="#7d888a"/><rect x="651.5" y="178" width="1.5" height="120" fill="#2a2a2a"/><rect x="653" y="178" width="2.5" height="120" fill="#e6e2e2"/><rect x="655.5" y="178" width="1" height="120" fill="#5a5a5a"/><rect x="630" y="176" width="68" height="1" fill="#5a5a5a"/><rect x="630" y="177" width="68" height="1" fill="#8c8c8c"/><rect x="632" y="178" width="66" height="1.5" fill="#ece6e6"/><rect x="632" y="179.5" width="66" height="1" fill="#7d888a"/><rect x="632" y="297" width="66" height="1" fill="#8c9090"/><rect x="632" y="298" width="66" height="1.2" fill="#4a4a4a"/><rect x="630" y="176" width="1.3" height="123" fill="#222"/><rect x="631.3" y="178" width="1.2" height="120" fill="#f1eded"/><rect x="632.5" y="178" width="1.2" height="120" fill="#6a6a6a"/><rect x="698" y="176" width="1.2" height="124" fill="#555"/><rect x="699.5" y="177" width="3" height="122" fill="#8c9cab"/><rect x="702.5" y="177" width="1" height="122" fill="#555"/><rect x="698" y="176" width="13" height="1" fill="#444"/><rect x="698" y="298.5" width="13" height="1" fill="#444"/><rect x="741" y="178" width="156" height="120" fill="#c2d8dd"/><rect x="741" y="201" width="156" height="1" fill="#5c5c5c"/><rect x="741" y="202" width="156" height="1" fill="#8c9090"/><rect x="741" y="203" width="156" height="2" fill="#ece6e6"/><rect x="741" y="205" width="156" height="1" fill="#a9b6b9"/><rect x="741" y="225" width="156" height="1" fill="#5c5c5c"/><rect x="741" y="226" width="156" height="1" fill="#8c9090"/><rect x="741" y="227" width="156" height="2" fill="#ece6e6"/><rect x="741" y="229" width="156" height="1" fill="#a9b6b9"/><rect x="741" y="249" width="156" height="1" fill="#5c5c5c"/><rect x="741" y="250" width="156" height="1" fill="#8c9090"/><rect x="741" y="251" width="156" height="2" fill="#ece6e6"/><rect x="741" y="253" width="156" height="1" fill="#a9b6b9"/><rect x="741" y="273" width="156" height="1" fill="#5c5c5c"/><rect x="741" y="274" width="156" height="1" fill="#8c9090"/><rect x="741" y="275" width="156" height="2" fill="#ece6e6"/><rect x="741" y="277" width="156" height="1" fill="#a9b6b9"/><rect x="757" y="178" width="1" height="120" fill="#768183"/><rect x="758" y="178" width="2" height="120" fill="#ece6e6"/><rect x="760" y="178" width="1" height="120" fill="#7d888a"/><rect x="796" y="178" width="1" height="120" fill="#768183"/><rect x="797" y="178" width="2" height="120" fill="#ece6e6"/><rect x="799" y="178" width="1" height="120" fill="#7d888a"/><rect x="816" y="178" width="1" height="120" fill="#768183"/><rect x="817" y="178" width="2" height="120" fill="#ece6e6"/><rect x="819" y="178" width="1" height="120" fill="#7d888a"/><rect x="836" y="178" width="1" height="120" fill="#768183"/><rect x="837" y="178" width="2" height="120" fill="#ece6e6"/><rect x="839" y="178" width="1" height="120" fill="#7d888a"/><rect x="875" y="178" width="1" height="120" fill="#768183"/><rect x="876" y="178" width="2" height="120" fill="#ece6e6"/><rect x="878" y="178" width="1" height="120" fill="#7d888a"/><rect x="774.5" y="178" width="1.5" height="120" fill="#2a2a2a"/><rect x="776" y="178" width="2.5" height="120" fill="#e6e2e2"/><rect x="778.5" y="178" width="1" height="120" fill="#5a5a5a"/><rect x="854.5" y="178" width="1.5" height="120" fill="#2a2a2a"/><rect x="856" y="178" width="2.5" height="120" fill="#e6e2e2"/><rect x="858.5" y="178" width="1" height="120" fill="#5a5a5a"/><rect x="739" y="176" width="158" height="1" fill="#5a5a5a"/><rect x="739" y="177" width="158" height="1" fill="#8c8c8c"/><rect x="741" y="178" width="156" height="1.5" fill="#ece6e6"/><rect x="741" y="179.5" width="156" height="1" fill="#7d888a"/><rect x="741" y="297" width="156" height="1" fill="#8c9090"/><rect x="741" y="298" width="156" height="1.2" fill="#4a4a4a"/><rect x="737" y="176" width="4" height="123" fill="#e4e2e2"/><rect x="737" y="176" width="1" height="123" fill="#777"/><rect x="740" y="178" width="1" height="120" fill="#555"/><rect x="737" y="176" width="161" height="2" fill="#606060"/><rect x="896" y="176" width="2" height="123" fill="#555"/><g filter="url(#sh)" fill="none" stroke="#f80000" stroke-width="3.1"><ellipse cx="753.3" cy="241.8" rx="24.5" ry="74.5"/><ellipse cx="819" cy="250.3" rx="40.5" ry="77.5"/><ellipse cx="882.5" cy="247.5" rx="24.5" ry="76.5"/></g><g filter="url(#sh)" fill="#ffffff" class="serif"><text x="748.6" y="160">a</text><text x="808.3" y="160">b</text><text x="867.6" y="162">c</text></g><rect x="781.5" y="336" width="1" height="3" fill="#555"/><path d="M1270 118.5H1318L1326 126.5V173.5L1318 181.5H1270L1262 173.5V126.5z" stroke="#1e1e1e" stroke-width="1.1" fill="#e1e2e5"/><path d="M1277.5 126H1310.5L1318 133.5V166.5L1310.5 174H1277.5L1270 166.5V133.5z" stroke="#1e1e1e" stroke-width="1.1" fill="#e1e2e5"/><path d="M1277.5 118.5V126M1310.5 118.5V126M1277.5 174V181.5M1310.5 174V181.5M1262 133.5H1270M1262 166.5H1270M1318 133.5H1326M1318 166.5H1326" stroke="#1e1e1e" stroke-width="1.1" fill="none"/><path d="M1278 125H1310M1271 134V166M1317 134V166M1278 175H1310" stroke="#666" stroke-width="0.8" fill="none"/><text x="1275.3" y="154.5" font-size="12" fill="#3a3a3a" textLength="37.5" lengthAdjust="spacingAndGlyphs">REAR</text><path d="M1277 184.5H1328.7" stroke="#f00" stroke-width="2"/><path d="M1328.7 132.5V184" stroke="#00f" stroke-width="2"/><rect x="1327.7" y="183.5" width="2" height="2" fill="#0c0"/><path d="M1294.1 84.5L1306 96.7H1282.3z" fill="#e1e2e5" stroke="#1e1e1e" stroke-width="1" stroke-dasharray="3 0.6"/><path d="M1294.1 215.5L1306 203.3H1282.3z" fill="#e1e2e5" stroke="#1e1e1e" stroke-width="1" stroke-dasharray="3 0.6"/><path d="M1228 149.8L1240.5 138.5V161z" fill="#e1e2e5" stroke="#1e1e1e" stroke-width="1" stroke-dasharray="3 0.6"/><path d="M1359.5 149.8L1347 138.5V161z" fill="#e1e2e5" stroke="#1e1e1e" stroke-width="1" stroke-dasharray="3 0.6"/><circle cx="1351.1" cy="92.4" r="6.8" fill="#e1e2e5" stroke="#1e1e1e" stroke-width="1"/><path d="M1274 90.5L1277 98Q1265 102 1256.5 110.5L1259 114L1244.5 118.7L1247.5 103.5L1250.5 106.5Q1260 96 1274 90.5z" fill="#e1e2e5" stroke="#1e1e1e" stroke-width="1" stroke-dasharray="3 0.6"/><path d="M1314.2 90.5L1311.2 98Q1323.2 102 1331.7 110.5L1329.2 114L1343.7 118.7L1340.7 103.5L1337.7 106.5Q1328.2 96 1314.2 90.5z" fill="#e1e2e5" stroke="#1e1e1e" stroke-width="1" stroke-dasharray="3 0.6"/><path d="M1329 191L1336.5 187.5L1349 191V202L1341.5 205.5L1329 202z" fill="#e1e2e5" stroke="#1e1e1e" stroke-width="1"/><path d="M1329 191L1341.5 194.5L1349 191M1341.5 194.5V205.5" fill="none" stroke="#1e1e1e" stroke-width="1"/><path d="M1329 522.8H1342.8" stroke="#7a1c1c" stroke-width="1.8"/><path d="M1342.8 522.8V510.5" stroke="#1c2a8a" stroke-width="1.8"/><path d="M1340.5 512L1342.8 508L1345.1 512z" fill="#1c2a8a"/><circle cx="1342.8" cy="522.8" r="1.5" fill="#1a7a1a"/><circle cx="1329" cy="522.8" r="1" fill="#7a1c1c"/><g font-size="9.5" fill="#111" font-weight="bold"><text x="1343.6" y="506.5">Z</text><text x="1327.3" y="521">X</text><text x="1343.6" y="522">Y</text></g></svg>
</body></html>
